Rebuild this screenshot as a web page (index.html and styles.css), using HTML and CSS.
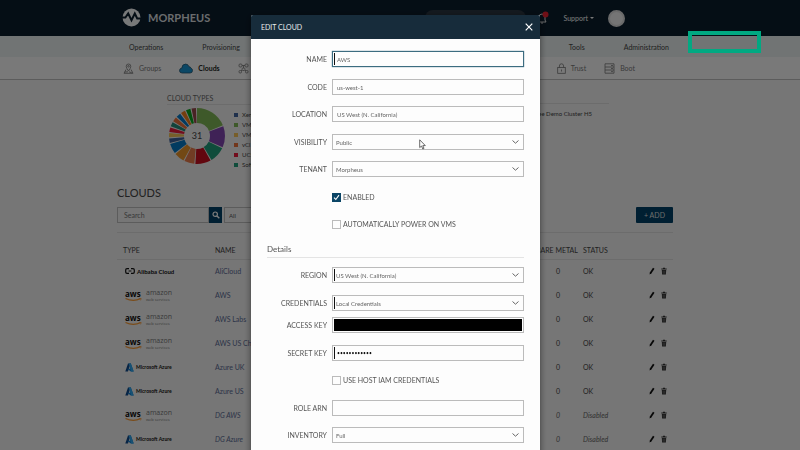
FILE: index.html
```html
<!DOCTYPE html>
<html lang="en">
  <head>
    <meta charset="utf-8">
    <meta name="viewport" content="width=device-width, initial-scale=1.0">
    <title>Morpheus - Clouds</title>
    <link rel="stylesheet" href="styles.css">
  </head>
  <body>
    <!-- shared icons -->
    <svg class="sprite" aria-hidden="true">
      <symbol id="pencil" viewBox="0 0 6 8"><path d="M.5 7.5 1 5.3 4 .8 5.5 1.8 2.5 6.3Z" fill="#111"/></symbol>
      <symbol id="trash" viewBox="0 0 6 8"><path d="M.3 1.6H2V.7H4V1.6H5.7V2.6H.3ZM.8 3H5.2L4.9 7.5H1.1Z" fill="#333"/><path d="M2.2 3.6V6.8M3.8 3.6V6.8" stroke="#999" stroke-width=".5"/></symbol>
      <symbol id="smile" viewBox="0 0 17 3"><path d="M.5.5Q8 4 15.5.8" fill="none" stroke="#f79a35" stroke-width="1.2"/><path d="M13.8.5H16.2L15.6 2.4" fill="none" stroke="#f79a35" stroke-width=".7"/></symbol>
      <symbol id="azure" viewBox="0 0 9 9"><path d="M3 .4H5.6L3 8.6H.3Z" fill="#114a8b"/><path d="M5 .4H5.8L8.7 8.6H5.8L2.3 5.8H5Z" fill="#0f7dd0"/><path d="M3.6.4H5.9L8.7 8.6H6.2Z" fill="#2fa5ea"/></symbol>
    </svg>

    <header class="topbar">
      <div class="container">
        <a class="brand" href="#">
          <svg width="19" height="19" viewBox="0 0 19 19"><circle cx="9.5" cy="9.5" r="9" fill="#f4f6f7"/><path d="M0 9.6H3.4L6.2 5.5 9.5 12.2 12.8 5.5 15.2 10.5H19" fill="none" stroke="#0c1d2c" stroke-width="2"/></svg>
          <span>MORPHEUS</span>
        </a>
        <input class="global-search" type="text" aria-label="Global search">
        <div class="user-tools">
          <button class="bell" aria-label="Alerts">
            <svg width="12" height="14" viewBox="0 0 12 14"><path d="M1 11H9L8 9V6Q8 3 5 3T2 6V9ZM4 12H6" fill="none" stroke="#ddd"/><circle cx="8.5" cy="3.5" r="3" fill="#e4202e"/></svg>
          </button>
          <a class="support" href="#">Support<span class="caret"></span></a>
          <span class="avatar"></span>
        </div>
      </div>
    </header>

    <nav class="mainnav">
      <div class="container">
        <div class="nav-group">
          <a href="#">Operations</a>
          <a href="#">Provisioning</a>
        </div>
        <div class="nav-group">
          <a href="#">Tools</a>
          <a href="#">Administration</a>
        </div>
      </div>
    </nav>

    <nav class="subnav">
      <div class="container">
        <div class="sub-group">
          <a href="#"><svg width="11" height="11" viewBox="0 0 11 11"><path d="M3 6.5 1 10.3H10L8 6.5M5.5 8Q3.2 5 3.2 3.3A2.3 2.3 0 0 1 7.8 3.3Q7.8 5 5.5 8ZM1.8 9 5 8.8M6 8.8 8.8 9.8"/><circle cx="5.5" cy="3.3" r=".8"/></svg>Groups</a>
          <a class="active" href="#"><svg width="14" height="11" viewBox="0 0 14 11"><path d="M3.2 10Q.5 10 .5 7.6.5 5.4 2.8 5.1 3 1.3 6.5 1.1 9.3 1 10 3.8 11.6 3.7 12 5.2 13.6 5.7 13.5 7.7 13.4 10 11 10Z" fill="#1791cf" stroke="#26546f"/></svg>Clouds</a>
          <a href="#" aria-label="Clusters"><svg width="11" height="11" viewBox="0 0 11 11"><rect x="1" y="1" width="3" height="3" rx="1"/><rect x="7" y="1" width="3" height="3" rx="1"/><rect x="4" y="5" width="3" height="2.5" rx="1"/><rect x="1" y="7.5" width="2.5" height="2.5" rx="1"/><rect x="7.5" y="7.5" width="2.5" height="2.5" rx="1"/><path d="M4 2.5H7M5.5 2.5V5M4 7 3 8M7 7 8 8"/></svg></a>
        </div>
        <div class="sub-group">
          <a href="#"><svg width="9" height="11" viewBox="0 0 9 11"><rect x=".7" y="4.5" width="7.6" height="5.8"/><path d="M2.4 4.5V3Q2.4.8 4.5.8T6.6 3V4.5M4.5 6.5V8.5"/></svg>Trust</a>
          <a href="#"><svg width="11" height="11" viewBox="0 0 11 11"><path d="M1 .8H10V10.2H1ZM1 4H10M1 7H10M7 2.5H9M7 5.5H9M7 8.6H9"/></svg>Boot</a>
        </div>
      </div>
    </nav>

    <main class="page">
      <div class="container">
        <section class="stats">
          <div class="stat">
            <h3>CLOUD TYPES</h3>
            <div class="chart">
              <svg width="58" height="58" viewBox="0 0 58 58">
                <g transform="rotate(-90 29 29)" fill="none" stroke-width="15">
                  <circle cx="29" cy="29" r="20.5" pathLength="31" stroke="#7fb657" stroke-dasharray="5.8 31"/>
                  <circle cx="29" cy="29" r="20.5" pathLength="31" stroke="#8147b0" stroke-dasharray="3.8 31" stroke-dashoffset="-6"/>
                  <circle cx="29" cy="29" r="20.5" pathLength="31" stroke="#1f9c78" stroke-dasharray="2.8 31" stroke-dashoffset="-10"/>
                  <circle cx="29" cy="29" r="20.5" pathLength="31" stroke="#c80f20" stroke-dasharray="2.8 31" stroke-dashoffset="-13"/>
                  <circle cx="29" cy="29" r="20.5" pathLength="31" stroke="#e77a4b" stroke-dasharray="1.8 31" stroke-dashoffset="-16"/>
                  <circle cx="29" cy="29" r="20.5" pathLength="31" stroke="#e9932a" stroke-dasharray="1.8 31" stroke-dashoffset="-18"/>
                  <circle cx="29" cy="29" r="20.5" pathLength="31" stroke="#0878c4" stroke-dasharray="1.8 31" stroke-dashoffset="-20"/>
                  <circle cx="29" cy="29" r="20.5" pathLength="31" stroke="#3f639b" stroke-dasharray=".8 31" stroke-dashoffset="-22"/>
                  <circle cx="29" cy="29" r="20.5" pathLength="31" stroke="#f2c057" stroke-dasharray=".8 31" stroke-dashoffset="-23"/>
                  <circle cx="29" cy="29" r="20.5" pathLength="31" stroke="#e81c3c" stroke-dasharray=".8 31" stroke-dashoffset="-24"/>
                  <circle cx="29" cy="29" r="20.5" pathLength="31" stroke="#258a78" stroke-dasharray=".8 31" stroke-dashoffset="-25"/>
                  <circle cx="29" cy="29" r="20.5" pathLength="31" stroke="#e8703a" stroke-dasharray=".8 31" stroke-dashoffset="-26"/>
                  <circle cx="29" cy="29" r="20.5" pathLength="31" stroke="#0878c4" stroke-dasharray=".8 31" stroke-dashoffset="-27"/>
                  <circle cx="29" cy="29" r="20.5" pathLength="31" stroke="#f07f1e" stroke-dasharray=".8 31" stroke-dashoffset="-28"/>
                  <circle cx="29" cy="29" r="20.5" pathLength="31" stroke="#0aa31e" stroke-dasharray=".8 31" stroke-dashoffset="-29"/>
                  <circle cx="29" cy="29" r="20.5" pathLength="31" stroke="#95484a" stroke-dasharray=".8 31" stroke-dashoffset="-30"/>
                </g>
                <text class="total" x="29" y="32" text-anchor="middle">31</text>
              </svg>
              <ul class="legend">
                <li class="xen">Xen</li>
                <li class="vmw">VM</li>
                <li class="vmc">VM</li>
                <li class="vcd">vCl</li>
                <li class="ucs">UCS</li>
                <li class="soft">Soft</li>
              </ul>
            </div>
          </div>
          <div class="stat stat-right">
            <p>ree Demo Cluster H5</p>
          </div>
        </section>

        <h2>CLOUDS</h2>
        <div class="toolbar">
          <div class="search">
            <input type="text" placeholder="Search" aria-label="Search clouds">
            <button aria-label="Search"><svg width="8" height="8" viewBox="0 0 8 8"><circle cx="3.2" cy="3.2" r="2.2" fill="none" stroke="#fff" stroke-width="1.2"/><path d="M5 5 7.3 7.3" stroke="#fff" stroke-width="1.4"/></svg></button>
          </div>
          <select class="filter" aria-label="Cloud type"><option>All</option></select>
          <button class="add">+ ADD</button>
        </div>

        <table class="clouds">
          <thead>
            <tr><th class="c-type">TYPE</th><th>NAME</th><th class="c-metal">BARE METAL</th><th class="c-status">STATUS</th><th class="c-actions"></th></tr>
          </thead>
          <tbody>
            <tr>
              <td><span class="logo ali"><svg width="10" height="6" viewBox="0 0 10 6"><path d="M4 .7H2Q.7.7.7 2V4Q.7 5.3 2 5.3H4M6 .7H8Q9.3.7 9.3 2V4Q9.3 5.3 8 5.3H6M3.6 3H6.4" fill="none" stroke="#111" stroke-width="1.2"/></svg>Alibaba Cloud</span></td>
              <td><a href="#">AliCloud</a></td><td class="num">0</td><td>OK</td>
              <td><span class="actions"><button aria-label="Edit"><svg><use href="#pencil"/></svg></button><button aria-label="Delete"><svg><use href="#trash"/></svg></button></span></td>
            </tr>
            <tr>
              <td><span class="logo aws"><b>aws<svg><use href="#smile"/></svg></b><span>amazon<small>web services</small></span></span></td>
              <td><a href="#">AWS</a></td><td class="num">0</td><td>OK</td>
              <td><span class="actions"><button aria-label="Edit"><svg><use href="#pencil"/></svg></button><button aria-label="Delete"><svg><use href="#trash"/></svg></button></span></td>
            </tr>
            <tr>
              <td><span class="logo aws"><b>aws<svg><use href="#smile"/></svg></b><span>amazon<small>web services</small></span></span></td>
              <td><a href="#">AWS Labs</a></td><td class="num">0</td><td>OK</td>
              <td><span class="actions"><button aria-label="Edit"><svg><use href="#pencil"/></svg></button><button aria-label="Delete"><svg><use href="#trash"/></svg></button></span></td>
            </tr>
            <tr>
              <td><span class="logo aws"><b>aws<svg><use href="#smile"/></svg></b><span>amazon<small>web services</small></span></span></td>
              <td><a href="#">AWS US Cha</a></td><td class="num">0</td><td>OK</td>
              <td><span class="actions"><button aria-label="Edit"><svg><use href="#pencil"/></svg></button><button aria-label="Delete"><svg><use href="#trash"/></svg></button></span></td>
            </tr>
            <tr>
              <td><span class="logo azure"><svg><use href="#azure"/></svg>Microsoft Azure</span></td>
              <td><a href="#">Azure UK</a></td><td class="num">0</td><td>OK</td>
              <td><span class="actions"><button aria-label="Edit"><svg><use href="#pencil"/></svg></button><button aria-label="Delete"><svg><use href="#trash"/></svg></button></span></td>
            </tr>
            <tr>
              <td><span class="logo azure"><svg><use href="#azure"/></svg>Microsoft Azure</span></td>
              <td><a href="#">Azure US</a></td><td class="num">0</td><td>OK</td>
              <td><span class="actions"><button aria-label="Edit"><svg><use href="#pencil"/></svg></button><button aria-label="Delete"><svg><use href="#trash"/></svg></button></span></td>
            </tr>
            <tr class="disabled">
              <td><span class="logo aws"><b>aws<svg><use href="#smile"/></svg></b><span>amazon<small>web services</small></span></span></td>
              <td><a href="#">DG AWS</a></td><td class="num">0</td><td>Disabled</td>
              <td><span class="actions"><button aria-label="Edit"><svg><use href="#pencil"/></svg></button><button aria-label="Delete"><svg><use href="#trash"/></svg></button></span></td>
            </tr>
            <tr class="disabled">
              <td><span class="logo azure"><svg><use href="#azure"/></svg>Microsoft Azure</span></td>
              <td><a href="#">DG Azure</a></td><td class="num">0</td><td>Disabled</td>
              <td><span class="actions"><button aria-label="Edit"><svg><use href="#pencil"/></svg></button><button aria-label="Delete"><svg><use href="#trash"/></svg></button></span></td>
            </tr>
          </tbody>
        </table>
      </div>
    </main>

    <div class="overlay">
      <div class="modal" role="dialog" aria-labelledby="modal-title">
        <div class="modal-header">
          <h1 id="modal-title">EDIT CLOUD</h1>
          <button class="close" aria-label="Close"><svg width="8" height="8" viewBox="0 0 8 8"><path d="M.7.7 7.3 7.3M7.3.7.7 7.3" stroke="#fff" stroke-width="1.2"/></svg></button>
        </div>
        <form class="modal-body">
          <div class="row"><label for="name">NAME</label><input class="required focused" id="name" type="text" value="AWS"></div>
          <div class="row"><label for="code">CODE</label><input id="code" type="text" value="us-west-1"></div>
          <div class="row"><label for="location">LOCATION</label><input id="location" type="text" value="US West (N. California)"></div>
          <div class="row"><label for="visibility">VISIBILITY</label><select id="visibility"><option>Public</option></select></div>
          <div class="row"><label for="tenant">TENANT</label><select id="tenant"><option>Morpheus</option></select></div>
          <div class="row check"><input id="enabled" type="checkbox" checked><label for="enabled">ENABLED</label></div>
          <div class="row check"><input id="power" type="checkbox"><label for="power">AUTOMATICALLY POWER ON VMS</label></div>
          <h4>Details</h4>
          <div class="row"><label for="region">REGION</label><select class="required" id="region"><option>US West (N. California)</option></select></div>
          <div class="row tight"><label for="credentials">CREDENTIALS</label><select class="required" id="credentials"><option>Local Credentials</option></select></div>
          <div class="row"><label for="access">ACCESS KEY</label><input class="redacted" id="access" type="text"></div>
          <div class="row"><label for="secret">SECRET KEY</label><input class="required" id="secret" type="password" value="************"></div>
          <div class="row check"><input id="iam" type="checkbox"><label for="iam">USE HOST IAM CREDENTIALS</label></div>
          <div class="row"><label for="arn">ROLE ARN</label><input id="arn" type="text"></div>
          <div class="row"><label for="inventory">INVENTORY</label><select id="inventory"><option>Full</option></select></div>
        </form>
      </div>
    </div>

    <div class="highlight"></div>
    <svg class="cursor" width="7" height="11" viewBox="0 0 7 11"><path d="M.7.8V8.6L2.5 7 3.8 10 5 9.4 3.8 6.6H6.3Z" fill="#fff" stroke="#444" stroke-width=".8"/></svg>
  </body>
</html>
```

FILE: styles.css
```css
* {
    box-sizing: border-box;
}

body {
    margin: 0;
    height: 100vh;
    overflow: hidden;
    font-family: Lato, "Open Sans", sans-serif;
    font-size: 7px;
    color: #444;
    background-color: #f0f0f0;
}

h1, h2, h3, h4, p, ul {
    margin: 0;
    padding: 0;
    font-weight: normal;
}

a {
    color: inherit;
    text-decoration: none;
}

button, input, select {
    font-family: inherit;
    margin: 0;
    padding: 0;
    border: none;
    border-radius: 0;
    background: none;
}

button {
    display: flex;
    align-items: center;
    justify-content: center;
}

svg {
    display: block;
    flex: none;
}

.sprite {
    position: absolute;
    width: 0;
    height: 0;
}

.topbar, .mainnav, .subnav, .page {
    padding-right: 10px;
}

.container {
    width: 556px;
    max-width: 100%;
    margin: 0 auto;
}

.topbar .container, .mainnav .container, .subnav .container {
    display: flex;
    align-items: center;
    justify-content: space-between;
    height: 100%;
}

/* top bar */
.topbar {
    height: 36px;
    background-color: #0c1d2c;
    color: #f4f6f7;
}

.brand {
    display: flex;
    align-items: center;
    gap: 7px;
    padding: 0 0 2px 5px;
    font-size: 11px;
    font-weight: bold;
    color: #d8dcdf;
}

.global-search {
    width: 101px;
    height: 16px;
    margin-left: auto;
    border-radius: 8px;
    background-color: #2b3641;
}

.user-tools {
    display: flex;
    align-items: center;
    gap: 14px;
    padding: 0 48px 0 11px;
}

.support {
    display: flex;
    align-items: center;
    gap: 2px;
}

.caret {
    border: 2px solid transparent;
    border-top-color: #f4f6f7;
    border-bottom: none;
}

.avatar {
    width: 17px;
    height: 17px;
    border: 2px solid #d8d8d8;
    border-radius: 50%;
    background-color: #eee;
}

/* navigation */
.mainnav {
    height: 21px;
    background-color: #e6ecec;
}

.nav-group {
    display: flex;
    gap: 39px;
    padding: 0 4px 0 12px;
}

.subnav {
    height: 23px;
    border-bottom: 1px solid #bbb;
    background-color: #f7f7f7;
    color: #777;
}

.sub-group {
    display: flex;
    gap: 18px;
    padding: 0 38px 0 6px;
}

.sub-group a {
    display: flex;
    align-items: center;
    gap: 5px;
}

.sub-group svg {
    fill: none;
    stroke: #777;
    stroke-width: 0.8;
}

.sub-group .active {
    color: #222;
    font-weight: bold;
}

/* cloud type stats */
.stats {
    display: flex;
    justify-content: space-between;
    height: 105px;
    padding: 14px 64px 0 50px;
}

.stat h3 {
    width: 160px;
    padding-bottom: 1px;
    border-bottom: 1px solid #ddd;
    font-size: 7px;
    line-height: 9px;
    color: #666;
}

.chart {
    display: flex;
    gap: 8px;
    padding: 2px 0 0 1px;
}

.total {
    font-size: 9px;
    fill: #444;
}

.legend {
    padding-top: 3px;
    list-style: none;
    font-size: 6px;
    line-height: 10px;
}

.legend li {
    display: flex;
    align-items: center;
    gap: 4px;
}

.legend li::before {
    content: "";
    width: 4px;
    height: 4px;
    background-color: currentColor;
}

.xen::before { color: #3f639b; }
.vmw::before { color: #7fb657; }
.vmc::before { color: #f2c057; }
.vcd::before { color: #e8703a; }
.ucs::before { color: #e81c3c; }
.soft::before { color: #1f9c78; }

.stat-right {
    width: 120px;
    margin-top: 9px;
    padding: 6px 17px 0 0;
    border-top: 1px solid #ddd;
    text-align: right;
    font-size: 6px;
}

h2 {
    font-size: 11px;
    line-height: 16px;
}

.toolbar {
    display: flex;
    gap: 2px;
    padding: 6px 0 9px;
    border-bottom: 1px solid #ddd;
}

.search {
    display: flex;
    width: 105px;
}

.search input, .filter {
    flex: 1;
    min-width: 0;
    height: 16px;
    padding-left: 6px;
    border: 1px solid #bbb;
    font-size: 7px;
}

.search button, .add {
    width: 13px;
    height: 16px;
    background-color: #004066;
}

.filter {
    flex: none;
    width: 100px;
    padding-left: 4px;
    appearance: none;
    color: #555;
    font-size: 6px;
}

.toolbar .add {
    width: 37px;
    margin-left: auto;
    border-radius: 1px;
    color: #ddd;
    font-size: 7px;
}

/* cloud list */
.clouds {
    width: 100%;
    table-layout: fixed;
    border-collapse: collapse;
}

.clouds th {
    height: 26px;
    padding: 8px 0 0 6px;
    border-bottom: 1px solid #ddd;
    text-align: left;
    font-weight: normal;
    white-space: nowrap;
}

.clouds td {
    height: 24px;
    padding: 0 0 0 6px;
}

.clouds td a {
    color: #5a6a92;
}

.c-type { width: 92px; }
.c-metal { width: 46px; }
.c-status { width: 66px; }
.c-actions { width: 30px; }

.clouds th.c-metal {
    padding-left: 5px;
}

.clouds td.num {
    padding: 0 17px 0 0;
    text-align: right;
}

.disabled td {
    font-style: italic;
    color: #666;
}

.logo {
    display: flex;
    align-items: center;
    font-style: normal;
    color: #111;
    padding-left: 2px;
}

.ali {
    gap: 2px;
    font-weight: bold;
    font-size: 6px;
}

.azure {
    gap: 2px;
    font-size: 5px;
    font-weight: bold;
}

.azure svg {
    width: 9px;
    height: 9px;
}

.aws {
    gap: 4px;
    font-family: "Open Sans", sans-serif;
    font-size: 8px;
    line-height: 8px;
}

.aws svg {
    width: 17px;
    height: 3px;
}

.aws > span {
    font-size: 7px;
    color: #777;
}

.aws small {
    display: block;
    font-size: 4px;
    line-height: 5px;
}

.actions {
    display: flex;
    gap: 6px;
}

.actions svg {
    width: 6px;
    height: 8px;
}

/* edit dialog */
.overlay {
    position: fixed;
    inset: 0;
    display: flex;
    justify-content: center;
    align-items: flex-start;
    padding: 15px 9px 0 0;
    overflow: hidden;
    background-color: rgba(0, 0, 0, 0.51);
}

.modal {
    width: 289px;
    min-height: 100%;
    border-radius: 2px 2px 0 0;
    background-color: #fdfdfd;
    box-shadow: 0 2px 7px rgba(0, 0, 0, 0.5);
    color: #555;
}

.modal-header {
    display: flex;
    align-items: center;
    justify-content: space-between;
    height: 24px;
    padding: 0 7px 0 10px;
    border-radius: 2px 2px 0 0;
    background-color: #172c3b;
    color: #e8ecee;
}

.modal-header h1 {
    font-size: 7px;
}

.modal-body {
    padding: 12px 16px;
}

.row {
    display: flex;
    align-items: center;
    gap: 5px;
    height: 16px;
    margin-bottom: 12px;
}

.row:nth-child(even) {
    margin-bottom: 11px;
}

.row.tight {
    margin-bottom: 6px;
}

.row label {
    width: 60px;
    text-align: right;
    white-space: nowrap;
}

.row input, .row select {
    flex: 1;
    min-width: 0;
    height: 16px;
    padding: 0 4px;
    border: 1px solid #bbb;
    color: #666;
    font-size: 6px;
}

.row select {
    appearance: none;
    padding: 0 3px;
    background: url("data:image/svg+xml,%3Csvg xmlns='http://www.w3.org/2000/svg' width='7' height='4'%3E%3Cpath d='M.5.5 3.5 3.2 6.5.5' fill='none' stroke='%23666'/%3E%3C/svg%3E") no-repeat right 4px center;
}

.row .required {
    background-image: linear-gradient(#111, #111);
    background-repeat: no-repeat;
    background-position: 1px center;
    background-size: 1px 12px;
}

.row select.required {
    background-image: linear-gradient(#111, #111), url("data:image/svg+xml,%3Csvg xmlns='http://www.w3.org/2000/svg' width='7' height='4'%3E%3Cpath d='M.5.5 3.5 3.2 6.5.5' fill='none' stroke='%23666'/%3E%3C/svg%3E");
    background-position: 1px center, right 4px center;
    background-size: 1px 12px, 7px 4px;
}

.row .focused {
    border-color: #3c6c80;
    outline: none;
    box-shadow: 0 0 1px #3c6c80;
}

.row .redacted {
    padding: 1px;
    background-color: #000;
    background-clip: content-box;
}

.row input[type="password"] {
    color: #111;
    font-size: 5px;
}

.check {
    gap: 2px;
    padding-left: 65px;
}

.check label {
    width: auto;
}

.row input[type="checkbox"] {
    flex: none;
    appearance: none;
    width: 9px;
    height: 9px;
    padding: 0;
}

.row input[type="checkbox"]:checked {
    border-color: #0b4566;
    background: #0b4566 url("data:image/svg+xml,%3Csvg xmlns='http://www.w3.org/2000/svg' width='7' height='7'%3E%3Cpath d='M1 3.7 2.8 5.5 6 1.2' fill='none' stroke='white' stroke-width='1.1'/%3E%3C/svg%3E") no-repeat center;
}

h4 {
    margin-bottom: 9px;
    padding-bottom: 2px;
    border-bottom: 1px solid #e4e4e4;
    font-size: 8px;
    line-height: 11px;
}

.highlight {
    position: absolute;
    top: 31px;
    left: 688px;
    width: 73px;
    height: 22px;
    border: 4px solid #01a982;
}

.cursor {
    position: absolute;
    top: 139px;
    left: 419px;
}
```
